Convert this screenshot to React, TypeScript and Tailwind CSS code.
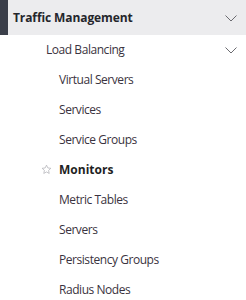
import React from "react";

const Chevron = () => (
  <svg width="12" height="7" viewBox="0 0 12 7" fill="none" className="shrink-0">
    <path d="M0.5 0.5 L6 6 L11.5 0.5" stroke="#6b6b70" strokeWidth="1" />
  </svg>
);

const Star = () => (
  <svg width="11" height="11" viewBox="0 0 24 24" fill="none" className="shrink-0">
    <path
      d="M12 2.5l2.9 6.1 6.6.8-4.9 4.6 1.3 6.6L12 17.3l-5.9 3.3 1.3-6.6-4.9-4.6 6.6-.8z"
      stroke="#b0b0b5"
      strokeWidth="1.6"
      strokeLinejoin="round"
    />
  </svg>
);

const items = [
  "Virtual Servers",
  "Services",
  "Service Groups",
  "Monitors",
  "Metric Tables",
  "Servers",
  "Persistency Groups",
  "Radius Nodes",
];

export default function App() {
  return (
    <div
      className="w-[246px] h-[300px] bg-white overflow-hidden text-[12px] tracking-[-0.45px] text-[#3a3340]"
      style={{ fontFamily: '"Open Sans", "Noto Sans", sans-serif' }}
    >
      <div className="flex h-[35px] items-center bg-[#ececee]">
        <div className="w-[8px] h-full bg-[#3b3f4a]" />
        <div className="flex-1 pl-[5px] font-bold tracking-[-0.1px] text-[#25262b]">Traffic Management</div>
        <div className="pr-[9px] pt-[1px]">
          <Chevron />
        </div>
      </div>
      <div className="flex h-[30px] items-center pl-[46px] pr-[9px]">
        <div className="flex-1">Load Balancing</div>
        <Chevron />
      </div>
      {items.map((it) => (
        <div key={it} className="relative flex h-[30px] items-center pl-[59px]">
          {it === "Monitors" ? (
            <>
              <div className="absolute left-[41px] top-[9px]">
                <Star />
              </div>
              <span className="font-bold tracking-normal text-[#1f1f24]">{it}</span>
            </>
          ) : (
            <span>{it}</span>
          )}
        </div>
      ))}
    </div>
  );
}
